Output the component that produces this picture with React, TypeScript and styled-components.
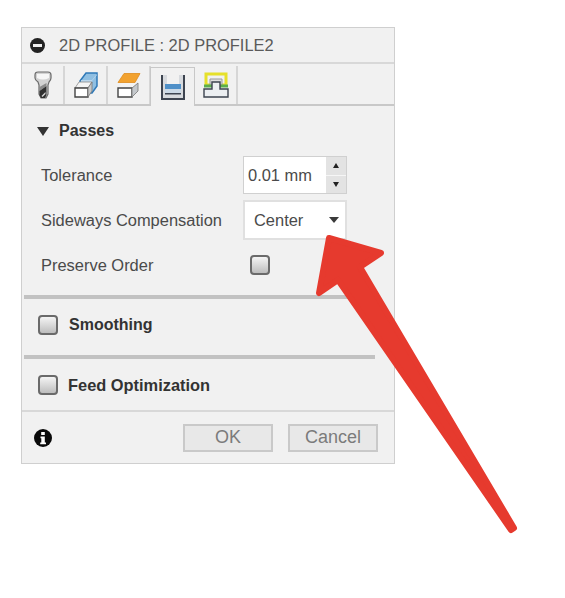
import React from 'react';
import styled, { createGlobalStyle } from 'styled-components';

const GlobalStyle = createGlobalStyle`
  html, body {
    margin: 0;
    padding: 0;
    background: #fff;
    font-family: 'Liberation Sans', Arial, sans-serif;
  }
`;

const Page = styled.div`
  position: relative;
  width: 565px;
  height: 598px;
  padding: 27px 0 0 21px;
  box-sizing: border-box;
  overflow: hidden;
`;

const Panel = styled.div`
  width: 374px;
  height: 437px;
  box-sizing: border-box;
  border: 1px solid #cfcfcf;
  background: #f1f1f1;
  display: flex;
  flex-direction: column;
`;

const TitleBar = styled.div`
  height: 36px;
  flex: none;
  box-sizing: border-box;
  display: flex;
  align-items: center;
  gap: 14px;
  padding-left: 8px;
  border-bottom: 2px solid #d8d8d8;
  font-size: 16.45px;
  color: #5a5a5a;
`;

const TabBar = styled.div`
  height: 42px;
  flex: none;
  box-sizing: border-box;
  display: flex;
  align-items: flex-end;
  border-bottom: 2px solid #c8c8c8;
`;

const Tab = styled.div<{ $active?: boolean }>`
  width: 43px;
  height: ${(p) => (p.$active ? '39px' : '38px')};
  margin-bottom: ${(p) => (p.$active ? '-2px' : '0')};
  box-sizing: border-box;
  display: flex;
  align-items: center;
  justify-content: center;
  border-right: 2px solid #d6d6d6;
  background: #f1f1f1;
  ${(p) => p.$active && 'border: 1px solid #c8c8c8; border-bottom: none; width: 45px; margin-left: -1px;'}
`;

const Body = styled.div`
  flex: 1;
  min-height: 0;
  display: flex;
  flex-direction: column;
`;

const GroupHeader = styled.div`
  height: 47px;
  flex: none;
  box-sizing: border-box;
  display: flex;
  align-items: center;
  gap: 10px;
  padding: 3px 0 0 15px;
  font-size: 16px;
  font-weight: bold;
  color: #333;
`;

const Caret = styled.span`
  width: 0;
  height: 0;
  border-left: 6px solid transparent;
  border-right: 6px solid transparent;
  border-top: 9px solid #333;
`;

const Rows = styled.div`
  display: flex;
  flex-direction: column;
  padding-left: 19px;
`;

const Row = styled.div<{ $height: number }>`
  height: ${(p) => p.$height}px;
  display: flex;
  align-items: center;
  font-size: 16.45px;
  color: #4a4a4a;
`;

const RowLabel = styled.span`
  width: 202px;
  flex: none;
`;

const SpinInput = styled.div`
  width: 104px;
  height: 38px;
  box-sizing: border-box;
  border: 1px solid #d0d0d0;
  background: #fff;
  display: flex;
`;

const SpinValue = styled.span`
  flex: 1;
  padding-left: 4px;
  line-height: 36px;
  font-size: 16.45px;
  color: #4a4a4a;
`;

const SpinButtons = styled.div`
  width: 20px;
  display: flex;
  flex-direction: column;
  background: #e3e3e3;
`;

const SpinButton = styled.div<{ $down?: boolean }>`
  flex: 1;
  display: flex;
  align-items: center;
  justify-content: center;
  ${(p) => p.$down && 'border-top: 1px solid #f6f6f6;'}

  &::after {
    content: '';
    border-left: 3.5px solid transparent;
    border-right: 3.5px solid transparent;
    ${(p) => (p.$down ? 'border-top: 5px solid #222;' : 'border-bottom: 5px solid #222;')}
  }
`;

const Select = styled.div`
  width: 104px;
  height: 40px;
  box-sizing: border-box;
  border: 2px solid #e0e0e0;
  background: #fff;
  display: flex;
  align-items: center;
  justify-content: space-between;
  padding: 0 6px 0 9px;
  font-size: 16.45px;
  color: #4a4a4a;
`;

const SelectCaret = styled.span`
  border-left: 5px solid transparent;
  border-right: 5px solid transparent;
  border-top: 6px solid #3a3a3a;
`;

const Checkbox = styled.span<{ $inset?: number }>`
  width: 20px;
  height: 20px;
  flex: none;
  box-sizing: border-box;
  margin-left: ${(p) => p.$inset ?? 0}px;
  border: 2px solid #6a6a6a;
  border-radius: 4px;
  background: linear-gradient(#f4f4f4, #bdbdbd);
`;

const Divider = styled.div<{ $top: number }>`
  height: 4px;
  flex: none;
  margin: ${(p) => p.$top}px 19px 0 2px;
  background: #c2c2c2;
`;

const Section = styled.div<{ $gap: number }>`
  height: 52px;
  flex: none;
  box-sizing: border-box;
  display: flex;
  align-items: center;
  gap: ${(p) => p.$gap}px;
  padding-left: 16px;
  font-size: 16px;
  font-weight: bold;
  color: #333;
`;

const FeedLabel = styled.span`
  font-size: 16.4px;
`;

const Footer = styled.div`
  height: 53px;
  flex: none;
  box-sizing: border-box;
  border-top: 2px solid #d8d8d8;
  display: flex;
  align-items: center;
  padding: 0 16px 0 12px;
  gap: 15px;
`;

const InfoSlot = styled.div`
  margin-right: auto;
  display: flex;
`;

const FooterButton = styled.div`
  width: 90px;
  height: 28px;
  box-sizing: border-box;
  border: 2px solid #c9c9c9;
  background: #e8e8e8;
  display: flex;
  align-items: center;
  justify-content: center;
  font-size: 18px;
  color: #7b7b7b;
`;

const ArrowOverlay = styled.svg`
  position: absolute;
  left: 0;
  top: 0;
  pointer-events: none;
`;

const ToolIcon = () => (
  <svg width="18" height="28" viewBox="0 0 18 28">
    <path d="M1 4Q1 1 4 1h10q3 0 3 3v3q0 2-2 4l-1 3v9l-2 4H7l-2-4v-9l-1-3Q1 9 1 7z" fill="#d2d2d2" stroke="#6a6a6a" strokeWidth="1.2" />
    <path d="M3 3h12v4q-6 3-12 0z" fill="#f6f6f6" />
    <path d="M5.5 16l7-4v3l-7 5z" fill="#8a8a8a" />
    <path d="M5.5 20l7-5v9l-1.5 3H7l-1.5-3z" fill="#2f2f2f" />
    <path d="M7.5 25l4-4v2l-3 3z" fill="#d8d8d8" />
  </svg>
);

const BoxBlueIcon = () => (
  <svg width="24" height="26" viewBox="0 0 24 26">
    <path d="M6 9l6-8h11v13l-5 7H6z" fill="#8fbfe2" stroke="#2f79b8" strokeWidth="1.5" />
    <path d="M7 8h11l5-6v1l-5 6v11H7z" fill="#b9d6ec" />
    <path d="M1 16l4-6h13l-4 6z" fill="#f4f4f4" stroke="#8a8a8a" strokeWidth="0.8" />
    <path d="M1 16h13v9H1z" fill="#fff" stroke="#444" strokeWidth="1.4" />
    <path d="M14 16l4-6v9l-4 6z" fill="#c8c8c8" stroke="#777" strokeWidth="0.8" />
  </svg>
);

const BoxOrangeIcon = () => (
  <svg width="24" height="26" viewBox="0 0 24 26">
    <path d="M1 10.5l6-9h16l-5 9z" fill="#f2a22f" stroke="#e08c1c" strokeWidth="0.8" />
    <path d="M1 16l4-5h16l-6 5z" fill="#f4f4f4" />
    <path d="M1 16h14v9H1z" fill="#fff" stroke="#444" strokeWidth="1.4" />
    <path d="M15 16l6-5v8l-6 6z" fill="#c4c8cc" stroke="#777" strokeWidth="0.8" />
  </svg>
);

const PassesIcon = () => (
  <svg width="24" height="25" viewBox="0 0 24 25">
    <path d="M1 0v24h22V0" fill="#d7dade" stroke="#3d4450" strokeWidth="2" />
    <path d="M4 0h16v21H4z" fill="#d7dade" />
    <path d="M6 0h12v9H6z" fill="#f1f1f1" />
    <path d="M4 9h16v5H4z" fill="#4f90c8" />
    <path d="M4 14h16v4H4z" fill="#cbd9e6" />
    <path d="M4 18h16v1.500H4z" fill="#3d4450" />
  </svg>
);

const LinkingIcon = () => (
  <svg width="26" height="26" viewBox="0 0 26 26">
    <path d="M3 2h20v11H3z" fill="#f1f1f1" stroke="#e6e02a" strokeWidth="3" />
    <path d="M7 7h12v6H7z" fill="#dedede" stroke="#9a9a9a" strokeWidth="1" />
    <path d="M1 14h24" stroke="#5cae4c" strokeWidth="3" />
    <path d="M1 17h8v-7h8v7h8v8H1z" fill="#eceff2" stroke="#3d4450" strokeWidth="1.4" />
  </svg>
);

const MinusIcon = () => (
  <svg width="15" height="15" viewBox="0 0 15 15">
    <circle cx="7.5" cy="7.5" r="7.5" fill="#222" />
    <rect x="3" y="6" width="9" height="3" fill="#eee" />
  </svg>
);

const InfoIcon = () => (
  <svg width="18" height="18" viewBox="0 0 18 18">
    <circle cx="9" cy="9" r="9" fill="#0a0a0a" />
    <rect x="7.2" y="3" width="3.6" height="3" fill="#fff" />
    <path d="M6.5 7.5h4.3v6h1.2v1.7H6.2v-1.7h1.1V9.2h-.8z" fill="#fff" />
  </svg>
);

export default function App() {
  return (
    <Page>
      <GlobalStyle />
      <Panel>
        <TitleBar>
          <MinusIcon />
          <span>2D PROFILE : 2D PROFILE2</span>
        </TitleBar>
        <TabBar>
          <Tab><ToolIcon /></Tab>
          <Tab><BoxBlueIcon /></Tab>
          <Tab><BoxOrangeIcon /></Tab>
          <Tab $active><PassesIcon /></Tab>
          <Tab><LinkingIcon /></Tab>
        </TabBar>
        <Body>
          <GroupHeader>
            <Caret />
            <span>Passes</span>
          </GroupHeader>
          <Rows>
            <Row $height={44}>
              <RowLabel>Tolerance</RowLabel>
              <SpinInput>
                <SpinValue>0.01 mm</SpinValue>
                <SpinButtons>
                  <SpinButton />
                  <SpinButton $down />
                </SpinButtons>
              </SpinInput>
            </Row>
            <Row $height={46}>
              <RowLabel>Sideways Compensation</RowLabel>
              <Select>
                <span>Center</span>
                <SelectCaret />
              </Select>
            </Row>
            <Row $height={44}>
              <RowLabel>Preserve Order</RowLabel>
              <Checkbox $inset={7} />
            </Row>
          </Rows>
          <Divider $top={8} />
          <Section $gap={11}>
            <Checkbox />
            <span>Smoothing</span>
          </Section>
          <Divider $top={4} />
          <Section $gap={10}>
            <Checkbox />
            <FeedLabel>Feed Optimization</FeedLabel>
          </Section>
        </Body>
        <Footer>
          <InfoSlot><InfoIcon /></InfoSlot>
          <FooterButton>OK</FooterButton>
          <FooterButton>Cancel</FooterButton>
        </Footer>
      </Panel>
      <ArrowOverlay width="565" height="598" viewBox="0 0 565 598">
        <path
          d="M329 238L381 253L360 267L514 528L511 530L338 280L319 293Z"
          fill="#e63a2e"
          stroke="#e63a2e"
          strokeWidth="6"
          strokeLinejoin="round"
        />
      </ArrowOverlay>
    </Page>
  );
}
